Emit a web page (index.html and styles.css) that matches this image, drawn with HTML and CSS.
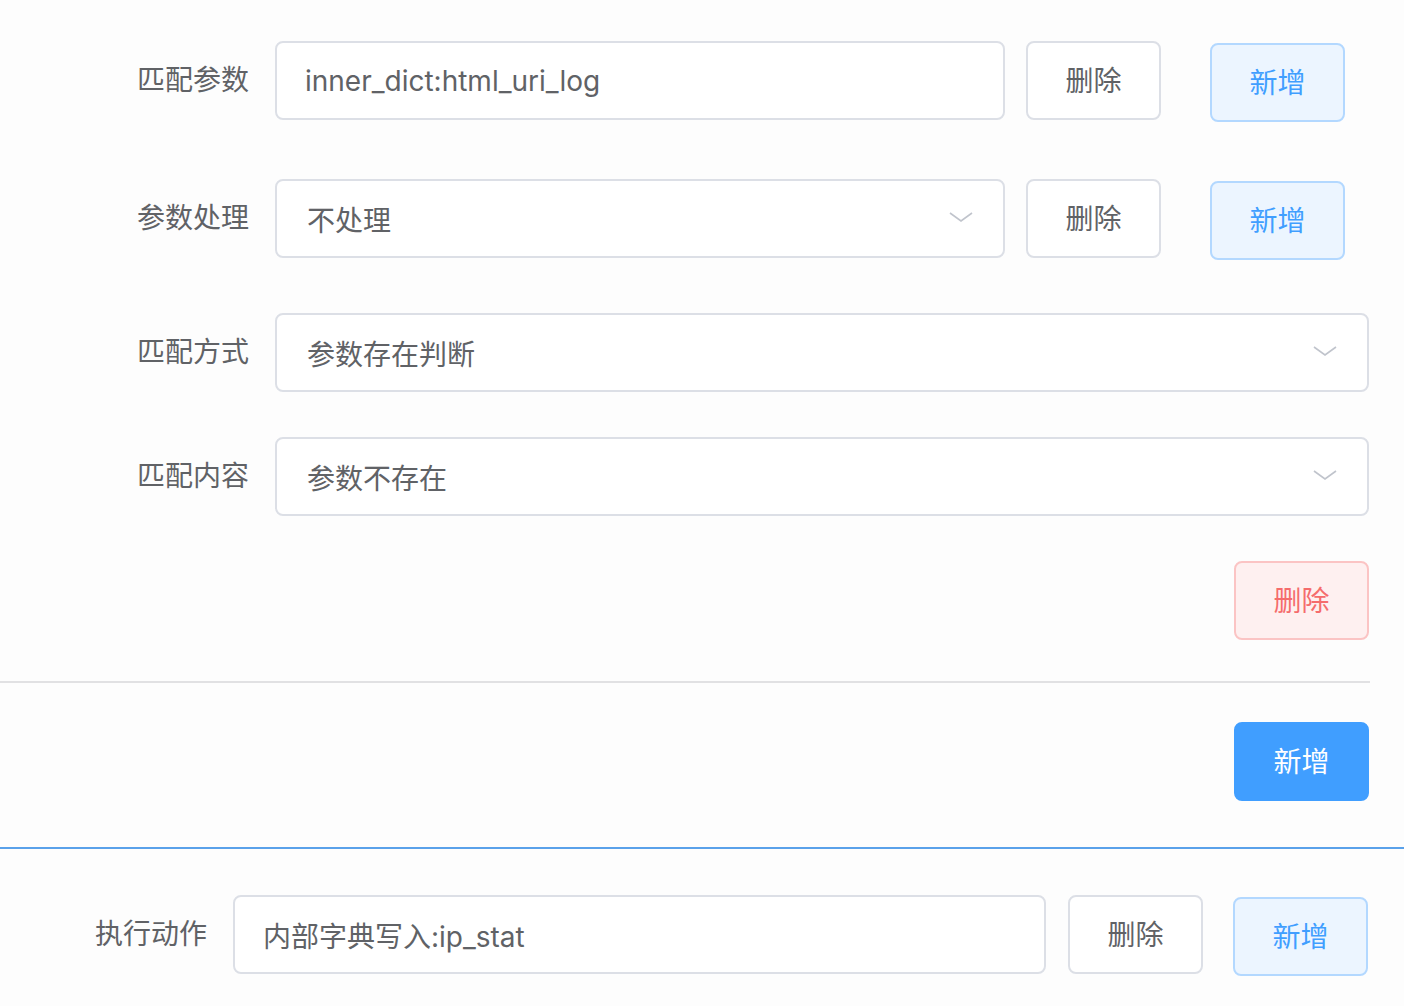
FILE: index.html
```html
<!DOCTYPE html>
<html lang="zh">
<head>
<meta charset="utf-8">
<title>规则</title>
<link rel="stylesheet" href="styles.css">
</head>
<body>
<div class="page">
  <div class="rules">
    <div class="form-item row-1">
      <div class="label">匹配参数</div>
      <div class="control">
        <div class="input"><span class="value">inner_dict:html_uri_log</span></div>
        <button class="btn btn-plain">删除</button>
        <button class="btn btn-add">新增</button>
      </div>
    </div>
    <div class="form-item row-2">
      <div class="label">参数处理</div>
      <div class="control">
        <div class="input select"><span class="value">不处理</span>
          <svg class="chev" viewBox="0 0 24 10" width="24" height="10"><path d="M1 1 L12 9 L23 1" fill="none" stroke="#c0c4cc" stroke-width="1.6"/></svg>
        </div>
        <button class="btn btn-plain">删除</button>
        <button class="btn btn-add">新增</button>
      </div>
    </div>
    <div class="form-item row-3">
      <div class="label">匹配方式</div>
      <div class="control full">
        <div class="input select"><span class="value">参数存在判断</span>
          <svg class="chev" viewBox="0 0 24 10" width="24" height="10"><path d="M1 1 L12 9 L23 1" fill="none" stroke="#c0c4cc" stroke-width="1.6"/></svg>
        </div>
      </div>
    </div>
    <div class="form-item row-4">
      <div class="label">匹配内容</div>
      <div class="control full">
        <div class="input select"><span class="value">参数不存在</span>
          <svg class="chev" viewBox="0 0 24 10" width="24" height="10"><path d="M1 1 L12 9 L23 1" fill="none" stroke="#c0c4cc" stroke-width="1.6"/></svg>
        </div>
      </div>
    </div>
    <div class="rule-actions">
      <button class="btn btn-danger">删除</button>
    </div>
  </div>
  <div class="divider"></div>
  <div class="add-rule">
    <button class="btn btn-primary">新增</button>
  </div>
  <div class="blue-line"></div>
  <div class="form-item action-row">
    <div class="label label-action">执行动作</div>
    <div class="control">
      <div class="input"><span class="value">内部字典写入:ip_stat</span></div>
      <button class="btn btn-plain">删除</button>
      <button class="btn btn-add btn-add-action">新增</button>
    </div>
  </div>
</div>
</body>
</html>
```
FILE: styles.css
```css
* { box-sizing: border-box; }
html, body {
  margin: 0;
  padding: 0;
  background: #fdfdfd;
}
body {
  font-family: "Inter", "Noto Sans CJK SC", sans-serif;
  font-size: 28px;
  color: #606266;
  width: 1404px;
  height: 1006px;
  overflow: hidden;
}
.page {
  padding-top: 41px;
}
.rules {
  padding-right: 35px;
}
.form-item {
  display: flex;
  align-items: flex-start;
}
.row-1 { margin-bottom: 57px; }
.row-2 { margin-bottom: 53px; }
.row-3 { margin-bottom: 45px; }
.row-4 { margin-bottom: 45px; }
.label {
  width: 275px;
  flex: none;
  text-align: right;
  padding-right: 26px;
  line-height: 79px;
  color: #606266;
}
.control {
  flex: 1;
  display: flex;
  align-items: flex-start;
  padding-right: 24px;
}
.control.full { padding-right: 0; }
.input {
  flex: 1;
  height: 79px;
  border: 2px solid #dcdfe6;
  border-radius: 8px;
  background: #fff;
  display: flex;
  align-items: center;
  padding-left: 28px;
  padding-right: 30px;
}
.input .value { flex: 1; }
.select .value { padding-left: 2px; }
.chev { flex: none; position: relative; top: -2px; }
.btn {
  font-family: inherit;
  font-size: 28px;
  width: 135px;
  height: 79px;
  border-radius: 8px;
  border: 2px solid #dcdfe6;
  background: #fff;
  color: #606266;
  padding: 0 0 3px 0;
  flex: none;
  cursor: pointer;
}
.btn-plain { margin-left: 21px; }
.btn-add {
  margin-left: 49px;
  margin-top: 2px;
  background: #ecf5ff;
  border-color: #b3d8ff;
  color: #409eff;
}
.btn-danger {
  background: #fef0f0;
  border-color: #fbc4c4;
  color: #f56c6c;
}
.btn-primary {
  background: #409eff;
  border-color: #409eff;
  color: #fff;
}
.rule-actions {
  display: flex;
  justify-content: flex-end;
}
.divider {
  margin-top: 41px;
  width: 1370px;
  height: 2px;
  background: #e1e1e3;
}
.add-rule {
  display: flex;
  justify-content: flex-end;
  padding-right: 35px;
  margin-top: 39px;
}
.blue-line {
  margin-top: 46px;
  height: 2px;
  background: #5aa1ea;
}
.action-row {
  margin-top: 46px;
}
.label-action { width: 233px; }
.action-row .control { padding-right: 36px; }
.action-row .btn-plain { margin-left: 22px; }
.btn-add-action { margin-left: 30px; }
```
